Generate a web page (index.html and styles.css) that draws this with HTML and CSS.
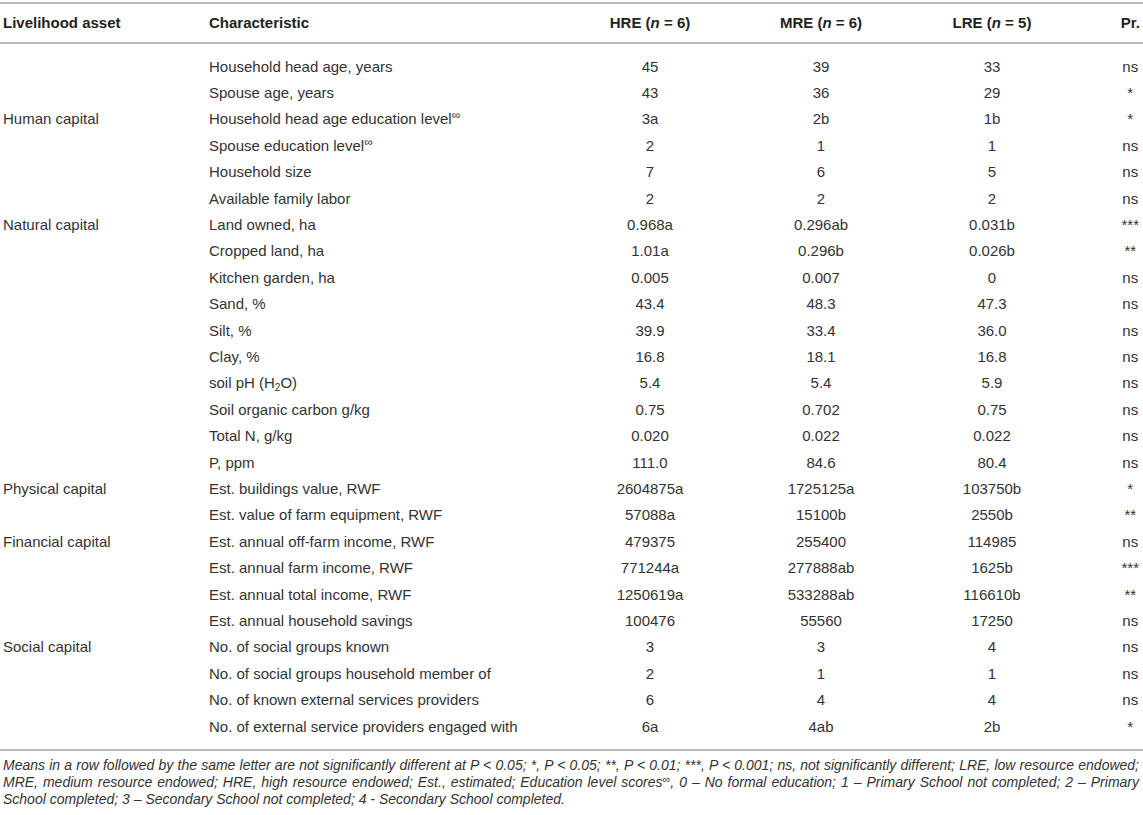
FILE: index.html
```html
<!DOCTYPE html>
<html>
<head>
<meta charset="utf-8">
<link rel="stylesheet" href="styles.css">
</head>
<body>
<table class="data">
  <colgroup>
    <col class="c-asset">
    <col class="c-char">
    <col class="c-val">
    <col class="c-val">
    <col class="c-val">
    <col class="c-pr">
  </colgroup>
  <thead>
    <tr>
      <th class="left">Livelihood asset</th>
      <th class="left">Characteristic</th>
      <th>HRE (<i>n</i> = 6)</th>
      <th>MRE (<i>n</i> = 6)</th>
      <th>LRE (<i>n</i> = 5)</th>
      <th class="pr">Pr.</th>
    </tr>
  </thead>
  <tbody>
    <tr class="first"><td class="left"></td><td class="left">Household head age, years</td><td>45</td><td>39</td><td>33</td><td class="pr">ns</td></tr>
    <tr><td class="left"></td><td class="left">Spouse age, years</td><td>43</td><td>36</td><td>29</td><td class="pr">*</td></tr>
    <tr><td class="left">Human capital</td><td class="left">Household head age education level<sup>∞</sup></td><td>3a</td><td>2b</td><td>1b</td><td class="pr">*</td></tr>
    <tr><td class="left"></td><td class="left">Spouse education level<sup>∞</sup></td><td>2</td><td>1</td><td>1</td><td class="pr">ns</td></tr>
    <tr><td class="left"></td><td class="left">Household size</td><td>7</td><td>6</td><td>5</td><td class="pr">ns</td></tr>
    <tr><td class="left"></td><td class="left">Available family labor</td><td>2</td><td>2</td><td>2</td><td class="pr">ns</td></tr>
    <tr><td class="left">Natural capital</td><td class="left">Land owned, ha</td><td>0.968a</td><td>0.296ab</td><td>0.031b</td><td class="pr">***</td></tr>
    <tr><td class="left"></td><td class="left">Cropped land, ha</td><td>1.01a</td><td>0.296b</td><td>0.026b</td><td class="pr">**</td></tr>
    <tr><td class="left"></td><td class="left">Kitchen garden, ha</td><td>0.005</td><td>0.007</td><td>0</td><td class="pr">ns</td></tr>
    <tr><td class="left"></td><td class="left">Sand, %</td><td>43.4</td><td>48.3</td><td>47.3</td><td class="pr">ns</td></tr>
    <tr><td class="left"></td><td class="left">Silt, %</td><td>39.9</td><td>33.4</td><td>36.0</td><td class="pr">ns</td></tr>
    <tr><td class="left"></td><td class="left">Clay, %</td><td>16.8</td><td>18.1</td><td>16.8</td><td class="pr">ns</td></tr>
    <tr><td class="left"></td><td class="left">soil pH (H<sub>2</sub>O)</td><td>5.4</td><td>5.4</td><td>5.9</td><td class="pr">ns</td></tr>
    <tr><td class="left"></td><td class="left">Soil organic carbon g/kg</td><td>0.75</td><td>0.702</td><td>0.75</td><td class="pr">ns</td></tr>
    <tr><td class="left"></td><td class="left">Total N, g/kg</td><td>0.020</td><td>0.022</td><td>0.022</td><td class="pr">ns</td></tr>
    <tr><td class="left"></td><td class="left">P, ppm</td><td>111.0</td><td>84.6</td><td>80.4</td><td class="pr">ns</td></tr>
    <tr><td class="left">Physical capital</td><td class="left">Est. buildings value, RWF</td><td>2604875a</td><td>1725125a</td><td>103750b</td><td class="pr">*</td></tr>
    <tr><td class="left"></td><td class="left">Est. value of farm equipment, RWF</td><td>57088a</td><td>15100b</td><td>2550b</td><td class="pr">**</td></tr>
    <tr><td class="left">Financial capital</td><td class="left">Est. annual off-farm income, RWF</td><td>479375</td><td>255400</td><td>114985</td><td class="pr">ns</td></tr>
    <tr><td class="left"></td><td class="left">Est. annual farm income, RWF</td><td>771244a</td><td>277888ab</td><td>1625b</td><td class="pr">***</td></tr>
    <tr><td class="left"></td><td class="left">Est. annual total income, RWF</td><td>1250619a</td><td>533288ab</td><td>116610b</td><td class="pr">**</td></tr>
    <tr><td class="left"></td><td class="left">Est. annual household savings</td><td>100476</td><td>55560</td><td>17250</td><td class="pr">ns</td></tr>
    <tr><td class="left">Social capital</td><td class="left">No. of social groups known</td><td>3</td><td>3</td><td>4</td><td class="pr">ns</td></tr>
    <tr><td class="left"></td><td class="left">No. of social groups household member of</td><td>2</td><td>1</td><td>1</td><td class="pr">ns</td></tr>
    <tr><td class="left"></td><td class="left">No. of known external services providers</td><td>6</td><td>4</td><td>4</td><td class="pr">ns</td></tr>
    <tr class="last"><td class="left"></td><td class="left">No. of external service providers engaged with</td><td>6a</td><td>4ab</td><td>2b</td><td class="pr">*</td></tr>
  </tbody>
</table>
<p class="note">Means in a row followed by the same letter are not significantly different at P &lt; 0.05; *, P &lt; 0.05; **, P &lt; 0.01; ***, P &lt; 0.001; ns, not significantly different; LRE, low resource endowed; MRE, medium resource endowed; HRE, high resource endowed; Est., estimated; Education level scores<sup>∞</sup>, 0 – No formal education; 1 – Primary School not completed; 2 – Primary School completed; 3 – Secondary School not completed; 4 - Secondary School completed.</p>
</body>
</html>
```

FILE: styles.css
```css
html, body {
  margin: 0;
  padding: 0;
  background: #ffffff;
}

body {
  padding-top: 2px;
  font-family: "Liberation Sans", Arial, Helvetica, sans-serif;
  color: #333333;
}

.data {
  width: 1143px;
  border-collapse: collapse;
  table-layout: fixed;
  font-size: 15px;
}

.c-asset { width: 206px; }
.c-char { width: 358.5px; }
.c-val { width: 171px; }
.c-pr { width: 65.5px; }

.data thead tr {
  border-top: 2px solid #bcbcbc;
  border-bottom: 2px solid #bcbcbc;
}

.data tbody tr.last {
  border-bottom: 2px solid #bcbcbc;
}

.data th {
  font-weight: bold;
  color: #222222;
  padding: 10px 0;
  line-height: 18px;
  text-align: center;
  white-space: nowrap;
}

.data th i {
  font-style: italic;
}

.data td {
  padding: 4px 0;
  line-height: 18.4px;
  text-align: center;
  white-space: nowrap;
}

.data .left {
  text-align: left;
  padding-left: 3px;
}

.data .pr {
  padding-left: 40px;
  text-align: center;
}

.data tr.first td {
  padding-top: 13.5px;
}

.data tr.last td {
  padding-bottom: 13px;
}

.data sup {
  font-size: 12px;
  line-height: 0;
  vertical-align: 5px;
}

.data sub {
  font-size: 10px;
  line-height: 0;
  vertical-align: -3px;
}

.note {
  margin: 6px 4px 0 3px;
  font-size: 14px;
  line-height: 17px;
  font-style: italic;
  text-align: justify;
  color: #333333;
}

.note sup {
  font-size: 11px;
  line-height: 0;
  vertical-align: 4px;
}
```
